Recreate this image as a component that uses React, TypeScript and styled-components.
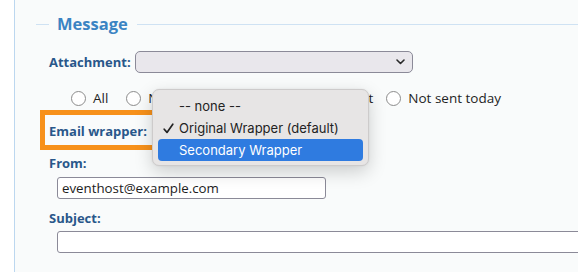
import React from 'react';
import styled, { createGlobalStyle } from 'styled-components';

const GlobalStyle = createGlobalStyle`
  html, body {
    margin: 0;
    padding: 0;
    background: #ffffff;
    overflow: hidden;
  }
  body {
    width: 578px;
    height: 272px;
  }
`;

const Page = styled.div`
  height: 272px;
  padding-left: 14px;
  background: #ffffff;
`;

const Panel = styled.div`
  position: relative;
  height: 100%;
  border-left: 1px solid #bcd7ef;
  background: #f9fbfb;
  font-family: 'Open Sans', 'DejaVu Sans', sans-serif;
`;

const Legend = styled.div`
  display: flex;
  align-items: center;
  height: 48px;
  padding-left: 21px;
  gap: 8px;
`;

const LegendLine = styled.div<{ $grow?: boolean }>`
  height: 1px;
  background: #cfe2f3;
  width: ${(p) => (p.$grow ? 'auto' : '13px')};
  flex: ${(p) => (p.$grow ? 1 : 'none')};
  margin-left: ${(p) => (p.$grow ? '1px' : '0')};
`;

const LegendText = styled.span`
  font-size: 16.5px;
  font-weight: 700;
  color: #3b84c3;
  line-height: 1;
`;

const Row = styled.div<{ $top: number }>`
  position: relative;
  display: flex;
  align-items: center;
  margin-top: ${(p) => p.$top}px;
  padding-left: 34px;
`;

const Label = styled.span`
  font-size: 13px;
  font-weight: 700;
  color: #29578a;
  line-height: 18px;
  white-space: nowrap;
`;

const Highlight = styled.span`
  display: inline-block;
  margin: -9px 0 -9px -9px;
  padding: 4px 5px 4px 4px;
  border: 5px solid #f7911b;
`;

const Select = styled.div`
  display: flex;
  align-items: center;
  justify-content: flex-end;
  box-sizing: border-box;
  width: 278px;
  height: 22px;
  margin-left: 4px;
  padding-right: 7px;
  border: 1px solid #8b8a98;
  border-radius: 5px;
  background: #e9e7ec;
`;

const Radios = styled.div`
  display: flex;
  align-items: center;
  height: 20px;
  margin-top: 15px;
  padding-left: 56px;
`;

const RadioOption = styled.label<{ $trail: number }>`
  display: flex;
  align-items: center;
  gap: 7px;
  margin-right: ${(p) => p.$trail}px;
  font-size: 13.5px;
  color: #1f1f1f;
  white-space: nowrap;
`;

const RadioCircle = styled.span`
  box-sizing: border-box;
  width: 15px;
  height: 15px;
  border: 1px solid #8c8c8c;
  border-radius: 50%;
  background: #ffffff;
`;

const FieldLabel = styled(Label)<{ $top: number }>`
  display: block;
  margin-top: ${(p) => p.$top}px;
  padding-left: 34px;
`;

const TextInput = styled.div<{ $top: number; $width: number }>`
  display: flex;
  align-items: center;
  box-sizing: border-box;
  width: ${(p) => p.$width}px;
  height: 22px;
  margin-top: ${(p) => p.$top}px;
  margin-left: 42px;
  padding-left: 4px;
  border: 1px solid #8b8a98;
  border-radius: 3px;
  background: #ffffff;
  font-size: 13.3px;
  color: #1c1c1c;
`;

const Menu = styled.div`
  position: absolute;
  top: -30px;
  left: 137px;
  box-sizing: border-box;
  width: 217px;
  height: 77px;
  padding: 5px 5px 4px;
  border: 1px solid #cdcbcb;
  border-radius: 7px;
  background: #e7e5e5;
  box-shadow: 0 6px 18px rgba(0, 0, 0, 0.18), 0 0 2px rgba(0, 0, 0, 0.08);
  font-family: Inter, 'Noto Sans', sans-serif;
  z-index: 2;
`;

const MenuItem = styled.div<{ $active?: boolean }>`
  position: relative;
  height: 22px;
  line-height: 22px;
  padding-left: 21px;
  border-radius: 4px;
  font-size: 13px;
  color: ${(p) => (p.$active ? '#ffffff' : '#232323')};
  background: ${(p) => (p.$active ? '#2f7be0' : 'transparent')};
  white-space: nowrap;
`;

const CheckMark = styled.svg`
  position: absolute;
  left: 5px;
  top: 6px;
`;

const Check = () => (
  <CheckMark width="11" height="11" viewBox="0 0 11 11">
    <path d="M1.2 6.2 L4 9.4 L9.8 1.2" fill="none" stroke="#232323" strokeWidth="1.7" strokeLinecap="round" strokeLinejoin="round" />
  </CheckMark>
);

const Chevron = () => (
  <svg width="9" height="6" viewBox="0 0 9 6">
    <path d="M1 1 L4.5 4.5 L8 1" fill="none" stroke="#2a2a2a" strokeWidth="1.6" strokeLinecap="round" strokeLinejoin="round" />
  </svg>
);

const radioOptions = [
  { label: 'All', trail: 18 },
  { label: 'No message sent', trail: 17 },
  { label: 'Already sent', trail: 13 },
  { label: 'Not sent today', trail: 0 },
];

const App: React.FC = () => {
  return (
    <>
      <GlobalStyle />
      <Page>
        <Panel>
          <Legend>
            <LegendLine />
            <LegendText>Message</LegendText>
            <LegendLine $grow />
          </Legend>

          <Row $top={3}>
            <Label>Attachment:</Label>
            <Select>
              <Chevron />
            </Select>
          </Row>

          <Radios>
            {radioOptions.map((o) => (
              <RadioOption key={o.label} $trail={o.trail}>
                <RadioCircle />
                {o.label}
              </RadioOption>
            ))}
          </Radios>

          <Row $top={11}>
            <Highlight>
              <Label>Email wrapper:</Label>
            </Highlight>
            <Menu>
              <MenuItem>-- none --</MenuItem>
              <MenuItem>
                <Check />
                Original Wrapper (default)
              </MenuItem>
              <MenuItem $active>Secondary Wrapper</MenuItem>
            </Menu>
          </Row>

          <FieldLabel $top={13}>From:</FieldLabel>
          <TextInput $top={5} $width={269}>eventhost@example.com</TextInput>

          <FieldLabel $top={10}>Subject:</FieldLabel>
          <TextInput $top={4} $width={560} />
        </Panel>
      </Page>
    </>
  );
};

export default App;
